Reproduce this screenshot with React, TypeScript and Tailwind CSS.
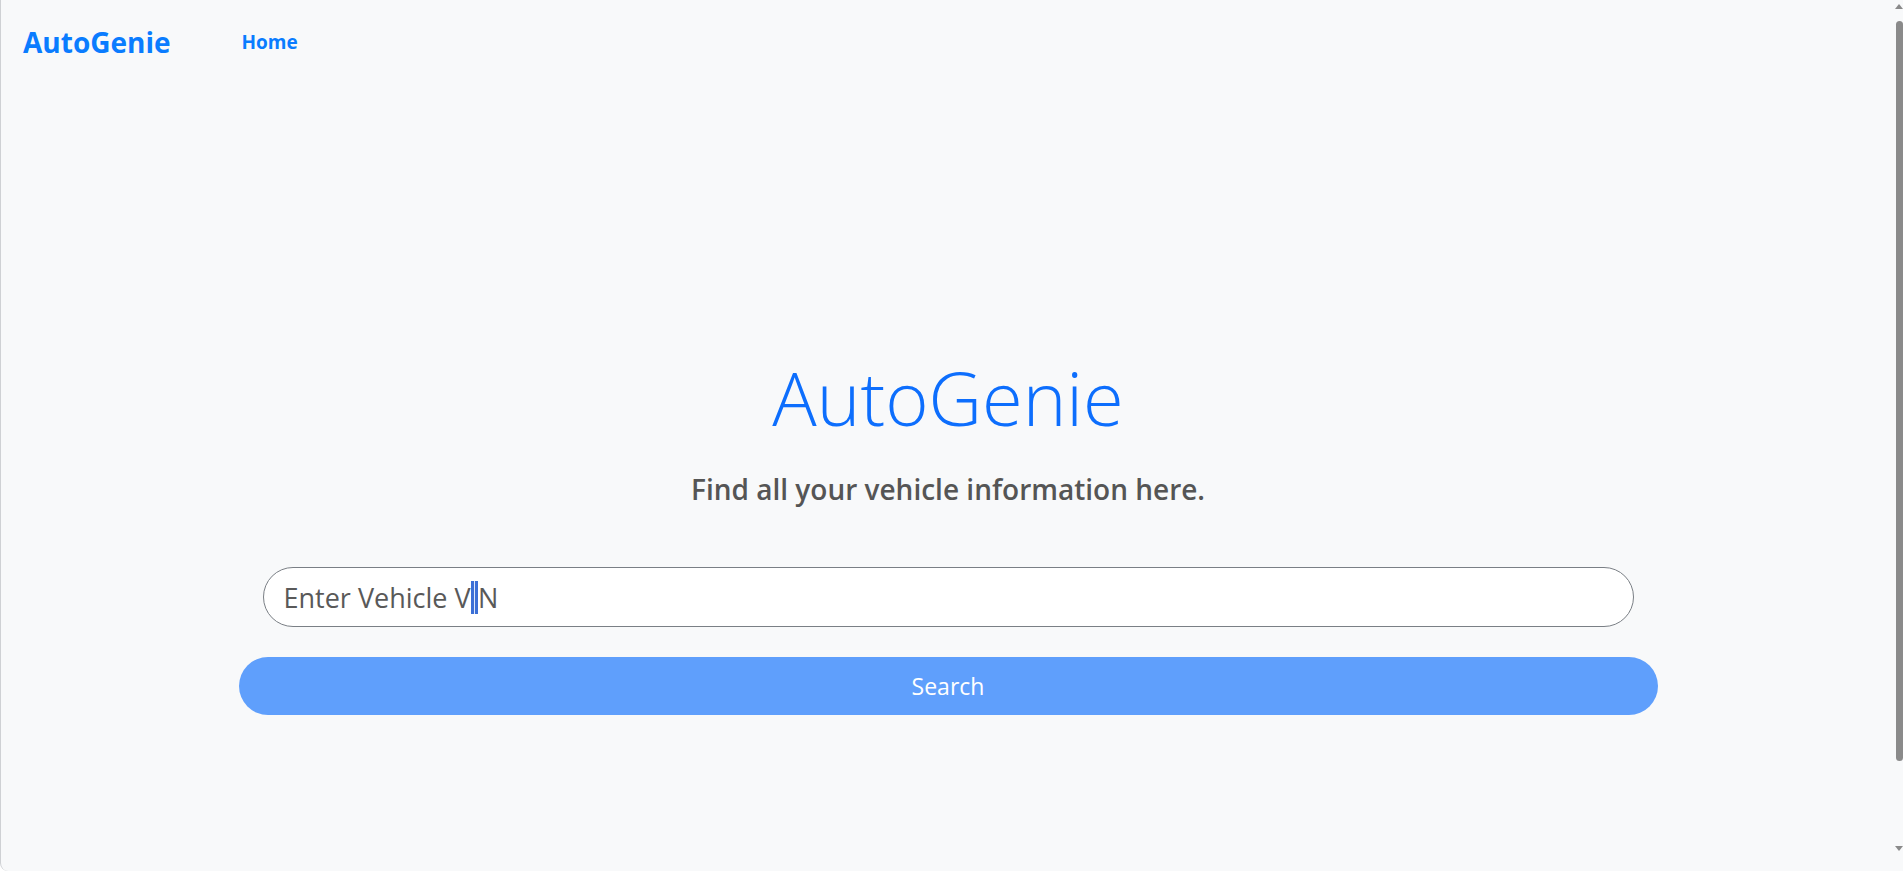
import { useState } from "react";

const FONT = "font-['Open_Sans','Noto_Sans',sans-serif]";

function Navbar() {
  return (
    <nav className="flex h-[84px] shrink-0 items-center pl-[22px]">
      <a href="#" className="text-[28px] font-bold leading-none text-[#0a7cff]">
        AutoGenie
      </a>
      <a href="#" className="ml-[71px] text-[19px] font-bold leading-none text-[#0a7cff]">
        Home
      </a>
    </nav>
  );
}

function FakeScrollbar() {
  return (
    <div className="flex w-[8px] shrink-0 flex-col items-center bg-[#f8f9fa]">
      <svg width="8" height="8" viewBox="0 0 8 8" className="mt-[2px]">
        <path d="M0 7 L4 2 L8 7 Z" fill="#8a8a8a" />
      </svg>
      <div className="mt-[11px] h-[740px] w-[7px] rounded-full bg-[#8a8a8a]" />
      <div className="flex-1" />
      <svg width="8" height="8" viewBox="0 0 8 8" className="mb-[18px]">
        <path d="M0 1 L4 6 L8 1 Z" fill="#8a8a8a" />
      </svg>
    </div>
  );
}

export default function App() {
  const [vin, setVin] = useState("");

  return (
    <div className={`flex h-[871px] overflow-hidden rounded-bl-[8px] border-l border-[#cfd1d4] bg-[#f8f9fa] ${FONT}`}>
      <div className="flex min-w-0 flex-1 flex-col">
        <Navbar />

        <main className="flex flex-col items-center pt-[271px]">
          <h1 className="text-[74px] font-light leading-[1.15] text-[#0d6efd]">AutoGenie</h1>
          <p className="mt-[32px] text-[28px] font-semibold leading-tight text-[#555555]">
            Find all your vehicle information here.
          </p>

          <form
            className="mt-[60px] flex w-[1419px] flex-col items-center gap-[30px]"
            onSubmit={(e) => e.preventDefault()}
          >
            <div className="relative w-[1371px]">
              <input
                value={vin}
                onChange={(e) => setVin(e.target.value)}
                placeholder="Enter Vehicle VIN"
                className="h-[60px] w-full rounded-full border border-[#7a7f85] bg-white pl-[20px] text-[27px] text-[#555555] outline-none placeholder:text-[#595959]"
              />
              {/* mouse I-beam sitting over the "I" of the placeholder */}
              {!vin && (
                <span className="pointer-events-none absolute inset-y-0 left-[21px] flex items-center whitespace-pre text-[27px]">
                  <span className="invisible">Enter Vehicle V</span>
                  <span className="flex h-[33px] w-[7px] justify-center bg-[#3b6fd6]">
                    <span className="h-full w-[1px] bg-[#dfe8fb]" />
                  </span>
                </span>
              )}
            </div>
            <button
              type="submit"
              disabled
              className="h-[58px] w-full rounded-full bg-[#5f9ffc] text-[23px] text-white"
            >
              Search
            </button>
          </form>
        </main>
      </div>
      <FakeScrollbar />
    </div>
  );
}
